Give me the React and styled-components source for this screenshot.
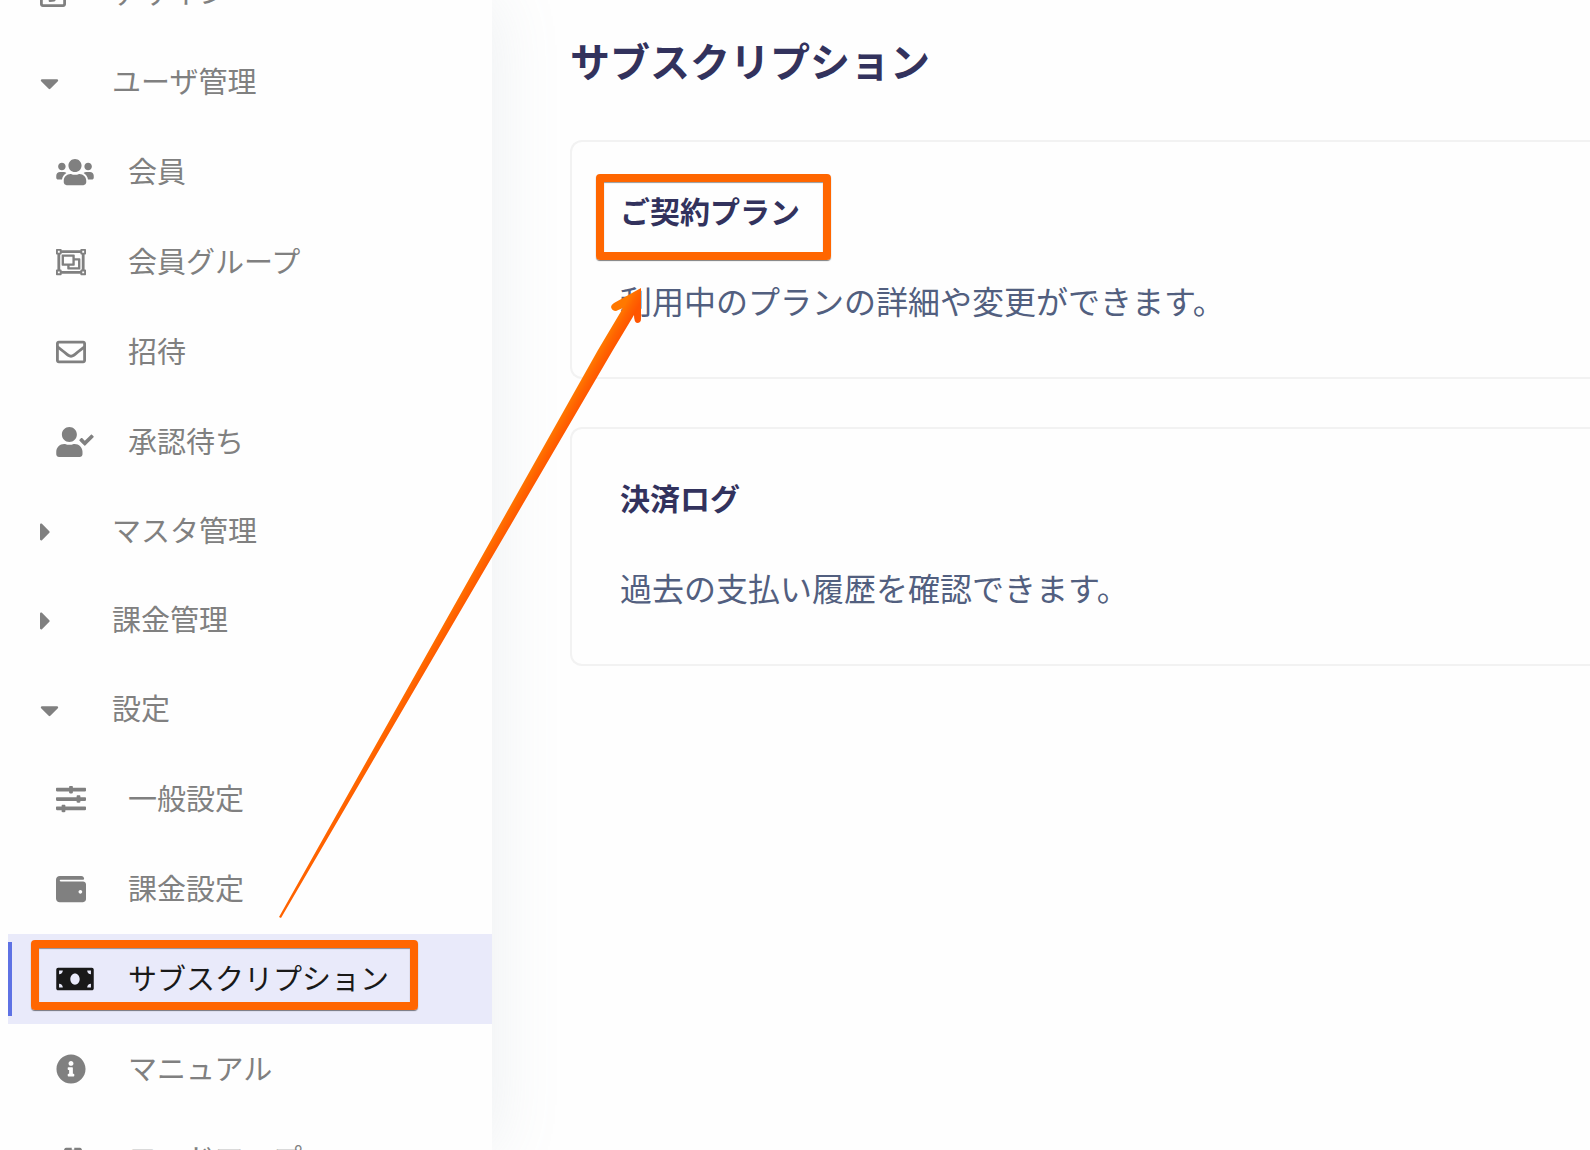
import React from "react";
import styled, { createGlobalStyle } from "styled-components";
import {
  FaCaretDown,
  FaCaretRight,
  FaUsers,
  FaRegObjectGroup,
  FaRegEnvelope,
  FaUserCheck,
  FaSlidersH,
  FaWallet,
  FaMoneyBill,
  FaInfoCircle,
  FaRoad,
} from "react-icons/fa";

const DesignIcon = () => (
  <svg viewBox="0 0 448 512" fill="currentColor">
    <path d="M400 32H48C21.5 32 0 53.5 0 80v352c0 26.500 21.5 48 48 48h352c26.5 0 48-21.5 48-48V80c0-26.5-21.5-48-48-48zm0 394c0 3.300-2.700 6-6 6H54c-3.300 0-6-2.700-6-6V86c0-3.300 2.700-6 6-6h340c3.300 0 6 2.700 6 6z" />
    <path d="M150 290v86q0 20 20 18l80-10 90-94-86-90z" />
  </svg>
);

const menu = [
  { text: "デザイン", icon: DesignIcon, width: 26, group: true },
  { text: "ユーザ管理", icon: FaCaretDown, width: 19, group: true },
  { text: "会員", icon: FaUsers, width: 38 },
  { text: "会員グループ", icon: FaRegObjectGroup, width: 30 },
  { text: "招待", icon: FaRegEnvelope, width: 30 },
  { text: "承認待ち", icon: FaUserCheck, width: 38 },
  { text: "マスタ管理", icon: FaCaretRight, width: 11, group: true },
  { text: "課金管理", icon: FaCaretRight, width: 11, group: true },
  { text: "設定", icon: FaCaretDown, width: 19, group: true },
  { text: "一般設定", icon: FaSlidersH, width: 30 },
  { text: "課金設定", icon: FaWallet, width: 30 },
  { text: "サブスクリプション", icon: FaMoneyBill, width: 38, active: true },
  { text: "マニュアル", icon: FaInfoCircle, width: 30 },
  { text: "ロードマップ", icon: FaRoad, width: 34 },
];

const cards = [
  {
    title: "ご契約プラン",
    text: "利用中のプランの詳細や変更ができます。",
    marked: true,
  },
  { title: "決済ログ", text: "過去の支払い履歴を確認できます。" },
];

const App = () => {
  return (
    <>
      <GlobalStyle />
      <Page>
        <Sidebar>
          <MenuList>
            {menu.map(({ text, icon: Icon, width, group, active }) => {
              const Row = group ? GroupButton : MenuLink;
              return (
                <li key={text}>
                  <Row
                    href={group ? undefined : "#"}
                    type={group ? "button" : undefined}
                    className={active ? "active" : undefined}
                  >
                    <IconBox $width={width}>
                      <Icon />
                    </IconBox>
                    <span className="label">{text}</span>
                    {active && <MenuMark />}
                  </Row>
                </li>
              );
            })}
          </MenuList>
        </Sidebar>
        <Content>
          <h1>サブスクリプション</h1>
          {cards.map((card) => {
            return (
              <Card key={card.title}>
                <h2>{card.title}</h2>
                <p>{card.text}</p>
                {card.marked && <CardMark />}
              </Card>
            );
          })}
        </Content>
        {/* arrow from the menu entry to the plan card */}
        <Arrow viewBox="0 0 380 640" aria-hidden="true">
          <defs>
            <linearGradient
              id="arrow"
              gradientUnits="userSpaceOnUse"
              x1="330"
              y1="67"
              x2="341.3"
              y2="73.5"
            >
              <stop offset="0" stopColor="#ff7800" />
              <stop offset="0.5" stopColor="#ff6400" />
              <stop offset="1" stopColor="#ff5500" />
            </linearGradient>
          </defs>
          <path
            d="M9 637L328 70L353 28L346 31Q342 31 341 27Q341 25 344 23L371 8V39Q371 43 367 43Q364 42 364 35L343 70L11 638Z"
            fill="url(#arrow)"
          />
        </Arrow>
      </Page>
    </>
  );
};

const GlobalStyle = createGlobalStyle`
  * {
    box-sizing: border-box;
  }
  body {
    margin: 0;
    background: #fefefe;
    font-family: "Noto Sans CJK JP", sans-serif;
  }
  h1,
  h2,
  p {
    margin: 0;
  }
`;

const Page = styled.div`
  position: relative;
  display: flex;
  height: 100vh;
  overflow: hidden;
`;

const Sidebar = styled.nav`
  flex: 0 0 492px;
  padding-left: 8px;
  box-shadow: 0 0 64px rgba(136, 152, 170, 0.15);
`;

/* the list is scrolled down a little */
const MenuList = styled.ul`
  margin: -51px 0 0;
  padding: 0;
  list-style: none;
`;

const IconBox = styled.span`
  display: flex;
  flex: 0 0 72px;
  svg {
    flex: none;
    width: ${(props) => props.$width}px;
    height: 30px;
  }
`;

const MenuLink = styled.a`
  position: relative;
  display: flex;
  align-items: center;
  height: 90px;
  padding-left: 48px;
  font-size: 29px;
  color: #808080;
  text-decoration: none;
  .label {
    padding-bottom: 5px;
  }
  &.active {
    color: #191919;
    background: #e9eafa;
  }
  &.active::before {
    content: "";
    position: absolute;
    left: 0;
    top: 8px;
    bottom: 8px;
    width: 4px;
    background: #5e72e4;
  }
`;

const GroupButton = styled.button`
  display: flex;
  align-items: center;
  width: 100%;
  height: 89px;
  padding: 0 0 0 32px;
  border: none;
  background: transparent;
  font-family: inherit;
  font-size: 29px;
  color: #808080;
  cursor: pointer;
  .label {
    padding-bottom: 5px;
  }
`;

const Mark = styled.span`
  position: absolute;
  border: 8px solid #ff6600;
  border-radius: 4px;
  box-shadow: 0 1px 1px rgba(0, 0, 0, 0.5), inset 0 1px 1px rgba(0, 0, 0, 0.4);
`;

const MenuMark = styled(Mark)`
  left: 23px;
  top: 6px;
  width: 387px;
  height: 70px;
`;

const CardMark = styled(Mark)`
  left: 24px;
  top: 32px;
  width: 235px;
  height: 86px;
`;

const Content = styled.main`
  flex: 1;
  min-width: 0;
  padding: 30px 0 0 78px;
  h1 {
    margin-bottom: 50px;
    font-size: 40px;
    line-height: 60px;
    color: #32325d;
  }
`;

const Card = styled.section`
  position: relative;
  margin-bottom: 48px;
  padding: 46px 48px 50px;
  border: 2px solid #f2f2f2;
  border-right: none;
  border-radius: 12px 0 0 12px;
  h2 {
    margin-bottom: 40px;
    font-size: 30px;
    line-height: 45px;
    color: #32325d;
  }
  p {
    font-size: 32px;
    line-height: 54px;
    color: #525f7f;
  }
`;

const Arrow = styled.svg`
  position: absolute;
  left: 270px;
  top: 280px;
  width: 380px;
  height: 640px;
  pointer-events: none;
`;

export default App;
